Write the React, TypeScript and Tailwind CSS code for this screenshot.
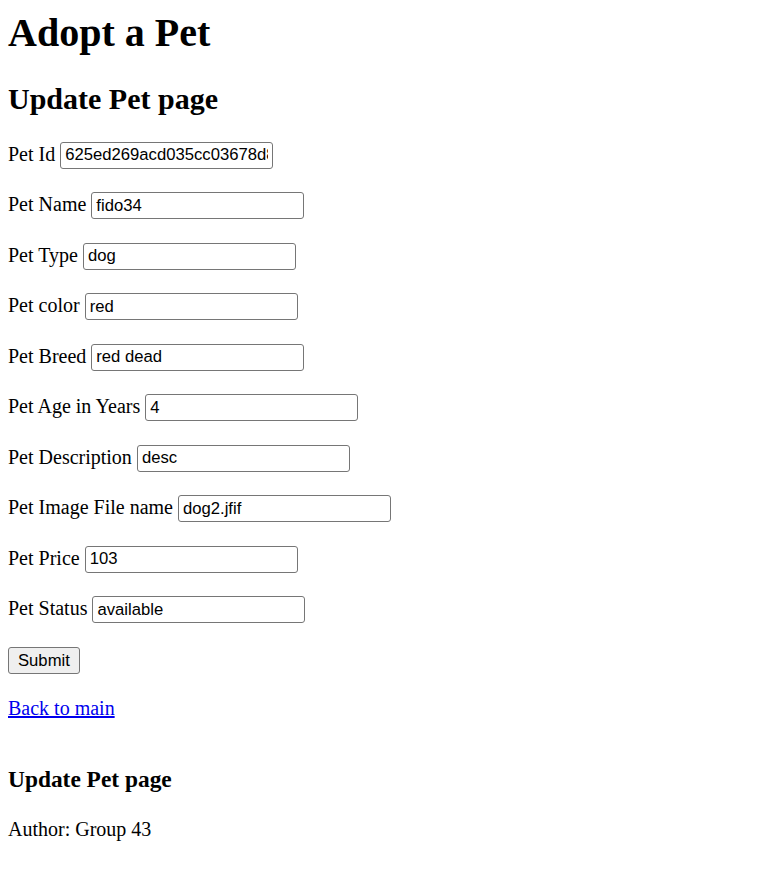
const fields: { label: string; value: string }[] = [
  { label: "Pet Id", value: "625ed269acd035cc03678d8c" },
  { label: "Pet Name", value: "fido34" },
  { label: "Pet Type", value: "dog" },
  { label: "Pet color", value: "red" },
  { label: "Pet Breed", value: "red dead" },
  { label: "Pet Age in Years", value: "4" },
  { label: "Pet Description", value: "desc" },
  { label: "Pet Image File name", value: "dog2.jfif" },
  { label: "Pet Price", value: "103" },
  { label: "Pet Status", value: "available" },
]

export default function App() {
  return (
    <div className="min-h-[885px] bg-white px-2 pt-[10px] text-[20px] text-black font-['Liberation_Serif','Times_New_Roman',serif]">
      <h1 className="text-[40px] font-bold leading-[46px] mb-[26px]">Adopt a Pet</h1>
      <h2 className="text-[30px] font-bold leading-[34.5px] mb-[25.4px]">Update Pet page</h2>

      <form onSubmit={(e) => e.preventDefault()}>
        {fields.map((f) => (
          <p key={f.label} className="h-[30.5px] mb-[20px] leading-[23px]">
            <label>{f.label} </label>
            <input
              type="text"
              defaultValue={f.value}
              className="w-[213px] h-[27px] align-baseline border border-[#767676] rounded-[3px] px-[4px] py-0 text-[16.67px] leading-[19px] text-black font-['Liberation_Sans',Arial,sans-serif] outline-none"
            />
          </p>
        ))}
        <p className="h-[30.5px] mb-[20px] leading-[23px]">
          <button
            type="submit"
            className="h-[27px] px-[9px] bg-[#efefef] border border-[#767676] rounded-[3px] text-[16.67px] leading-[19px] text-black font-['Liberation_Sans',Arial,sans-serif]"
          >
            Submit
          </button>
        </p>
      </form>

      <p className="leading-[23px]">
        <a href="#" className="text-[#0000ee] underline">
          Back to main
        </a>
      </p>

      <footer className="mt-[46px]">
        <h3 className="text-[23.4px] font-bold leading-[27px] mb-[24.5px]">Update Pet page</h3>
        <p className="leading-[23px]">Author: Group 43</p>
      </footer>
    </div>
  )
}
